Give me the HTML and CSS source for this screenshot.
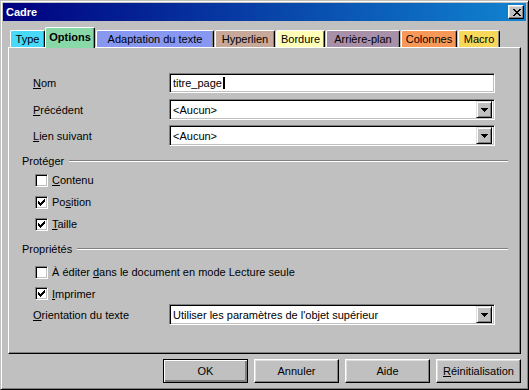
FILE: index.html
```html
<!DOCTYPE html>
<html lang="fr">
<head>
<meta charset="utf-8">
<title>Cadre</title>
<link rel="stylesheet" href="styles.css">
</head>
<body>
<div class="window">
  <div class="titlebar">
    <span class="title">Cadre</span>
    <span class="close"><svg width="8" height="7" viewBox="0 0 8 7" shape-rendering="crispEdges"><path d="M0 0h2v1H0z M6 0h2v1H6z M1 1h2v1H1z M5 1h2v1H5z M2 2h4v1H2z M3 3h2v1H3z M2 4h4v1H2z M1 5h2v1H1z M5 5h2v1H5z M0 6h2v1H0z M6 6h2v1H6z" fill="#000"/></svg></span>
  </div>
  <div class="tabs">
    <div class="tab t-type">Type</div>
    <div class="tab t-options active">Options</div>
    <div class="tab t-adapt">Adaptation du texte</div>
    <div class="tab t-hyper">Hyperlien</div>
    <div class="tab t-bord">Bordure</div>
    <div class="tab t-arr">Arrière-plan</div>
    <div class="tab t-col">Colonnes</div>
    <div class="tab t-macro">Macro</div>
  </div>
  <div class="panel">
    <div class="field f1">
      <span class="label"><u>N</u>om</span>
      <div class="input">titre_page<span class="caret"></span></div>
    </div>
    <div class="field f2">
      <span class="label"><u>P</u>récédent</span>
      <div class="input combo"><span class="value">&lt;Aucun&gt;</span><span class="dd"><svg width="7" height="4" viewBox="0 0 7 4" shape-rendering="crispEdges"><path d="M0 0h7v1H0z M1 1h5v1H1z M2 2h3v1H2z M3 3h1v1H3z" fill="#000"/></svg></span></div>
    </div>
    <div class="field f3">
      <span class="label"><u>L</u>ien suivant</span>
      <div class="input combo"><span class="value">&lt;Aucun&gt;</span><span class="dd"><svg width="7" height="4" viewBox="0 0 7 4" shape-rendering="crispEdges"><path d="M0 0h7v1H0z M1 1h5v1H1z M2 2h3v1H2z M3 3h1v1H3z" fill="#000"/></svg></span></div>
    </div>

    <div class="section s1"><span>Protéger</span><span class="rule"></span></div>
    <div class="check"><span class="box"></span><span><u>C</u>ontenu</span></div>
    <div class="check"><span class="box on"><svg width="7" height="7" viewBox="0 0 7 7" shape-rendering="crispEdges"><path d="M6 0h1v1H6z M5 1h2v1H5z M0 2h1v1H0z M4 2h3v1H4z M0 3h2v1H0z M3 3h3v1H3z M0 4h5v1H0z M1 5h3v1H1z M2 6h1v1H2z" fill="#000"/></svg></span><span>Po<u>s</u>ition</span></div>
    <div class="check"><span class="box on"><svg width="7" height="7" viewBox="0 0 7 7" shape-rendering="crispEdges"><path d="M6 0h1v1H6z M5 1h2v1H5z M0 2h1v1H0z M4 2h3v1H4z M0 3h2v1H0z M3 3h3v1H3z M0 4h5v1H0z M1 5h3v1H1z M2 6h1v1H2z" fill="#000"/></svg></span><span><u>T</u>aille</span></div>

    <div class="section s2"><span>Propriétés</span><span class="rule"></span></div>
    <div class="check c4"><span class="box"></span><span>À éditer <u>d</u>ans le document en mode Lecture seule</span></div>
    <div class="check c5"><span class="box on"><svg width="7" height="7" viewBox="0 0 7 7" shape-rendering="crispEdges"><path d="M6 0h1v1H6z M5 1h2v1H5z M0 2h1v1H0z M4 2h3v1H4z M0 3h2v1H0z M3 3h3v1H3z M0 4h5v1H0z M1 5h3v1H1z M2 6h1v1H2z" fill="#000"/></svg></span><span><u>I</u>mprimer</span></div>
    <div class="field f4">
      <span class="label"><u>O</u>rientation du texte</span>
      <div class="input combo"><span class="value">Utiliser les paramètres de l'objet supérieur</span><span class="dd"><svg width="7" height="4" viewBox="0 0 7 4" shape-rendering="crispEdges"><path d="M0 0h7v1H0z M1 1h5v1H1z M2 2h3v1H2z M3 3h1v1H3z" fill="#000"/></svg></span></div>
    </div>
  </div>
  <div class="buttons">
    <span class="btn default">OK</span>
    <span class="btn">Annuler</span>
    <span class="btn">Aide</span>
    <span class="btn"><u>R</u>éinitialisation</span>
  </div>
</div>
</body>
</html>
```

FILE: styles.css
```css
html, body {
  margin: 0;
  padding: 0;
  background: #c0c0c0;
}
body {
  font-family: "Liberation Sans", Arial, sans-serif;
  font-size: 11px;
  color: #000;
}
u { text-decoration: underline; text-underline-offset: 1px; }

.window {
  width: 529px;
  height: 390px;
  box-sizing: border-box;
  border: 1px solid;
  border-color: #c0c0c0 #000 #000 #c0c0c0;
  box-shadow: inset 1px 1px #fff, inset -1px -1px #808080;
  padding: 2px;
  background: #c0c0c0;
  display: flex;
  flex-direction: column;
}

.titlebar {
  height: 18px;
  flex: none;
  background: linear-gradient(to right, #000080, #1084d0);
  display: flex;
  align-items: center;
  justify-content: space-between;
  padding: 0 2px 0 3px;
}
.title {
  color: #fff;
  font-weight: bold;
  font-size: 11px;
}
.close {
  width: 16px;
  height: 14px;
  box-sizing: border-box;
  background: #c0c0c0;
  border: 1px solid;
  border-color: #fff #000 #000 #fff;
  box-shadow: inset -1px -1px #808080, inset 1px 1px #dfdfdf;
  display: flex;
  align-items: center;
  justify-content: center;
  padding-left: 1px;
}
.close svg { display: block; }

.tabs {
  height: 20px;
  margin-top: 6px;
  padding-left: 7px;
  display: flex;
  align-items: flex-end;
  flex: none;
}
.tab {
  height: 17px;
  box-sizing: border-box;
  border-top: 1px solid #fff;
  border-left: 1px solid #fff;
  border-right: 1px solid #000;
  box-shadow: inset -1px 0 #808080;
  border-radius: 2px 2px 0 0;
  display: flex;
  align-items: center;
  justify-content: center;
  margin-left: 1px;
  white-space: nowrap;
  padding-bottom: 1px;
}
.tab.active {
  height: 21px;
  margin-bottom: -1px;
  position: relative;
  z-index: 1;
  font-weight: bold;
  padding-bottom: 2px;
}
.t-type { width: 35px; margin-left: 0; background: #48d8f8; }
.t-options { width: 50px; margin-left: 0; background: #88d8a8; }
.t-adapt { width: 118px; background: #8898f0; }
.t-hyper { width: 60px; background: #c8a898; }
.t-bord { width: 49px; background: #ffffb8; }
.t-arr { width: 74px; background: #a890a8; }
.t-col { width: 56px; background: #f89858; }
.t-macro { width: 42px; background: #f8d858; }

.panel {
  margin: 0 5px;
  height: 307px;
  box-sizing: border-box;
  border: 1px solid;
  border-color: #fff #000 #000 #fff;
  box-shadow: inset -1px -1px #808080;
  padding: 25px 12px 0 13px;
  flex: none;
}

.field {
  display: flex;
  align-items: center;
  margin: 0 13px 0 11px;
}
.field .label {
  width: 136px;
  flex: none;
}
.input {
  flex: 1;
  height: 20px;
  box-sizing: border-box;
  background: #fff;
  border: 1px solid;
  border-color: #808080 #fff #fff #808080;
  box-shadow: inset 1px 1px #000, inset -1px -1px #c0c0c0;
  padding: 0 2px 0 3px;
  display: flex;
  align-items: center;
  white-space: nowrap;
}
.caret {
  display: inline-block;
  width: 2px;
  height: 12px;
  background: #000;
  margin-left: 1px;
}
.combo {
  height: 21px;
  padding-right: 2px;
}
.combo .value { flex: 1; }
.dd {
  width: 16px;
  height: 17px;
  box-sizing: border-box;
  background: #c0c0c0;
  border: 1px solid;
  border-color: #dfdfdf #000 #000 #dfdfdf;
  box-shadow: inset 1px 1px #fff, inset -1px -1px #808080;
  display: flex;
  align-items: center;
  justify-content: center;
}
.dd svg { display: block; }

.f2 { margin-top: 6px; }
.f3 { margin-top: 5px; }

.section {
  height: 16px;
  display: flex;
  align-items: center;
}
.section .rule {
  flex: 1;
  height: 0;
  border-top: 1px solid #808080;
  border-bottom: 1px solid #fff;
  margin-left: 5px;
}
.s1 { margin-top: 7px; }
.s2 { margin-top: 6px; }

.check {
  height: 22px;
  display: flex;
  align-items: center;
  margin-left: 13px;
  white-space: nowrap;
}
.c4 { margin-top: 4px; }
.c5 { height: 21px; }
.f4 { margin-top: 0; }

.box {
  width: 13px;
  height: 13px;
  box-sizing: border-box;
  flex: none;
  background: #fff;
  border: 1px solid;
  border-color: #808080 #fff #fff #808080;
  box-shadow: inset 1px 1px #000, inset -1px -1px #c0c0c0;
  margin-right: 4px;
  display: flex;
  align-items: center;
  justify-content: center;
}
.box svg { display: block; }

.buttons {
  margin: 5px 5px 0 0;
  display: flex;
  justify-content: flex-end;
  gap: 6px;
}
.btn {
  width: 85px;
  height: 24px;
  box-sizing: border-box;
  border: 1px solid;
  border-color: #fff #000 #000 #fff;
  box-shadow: inset -1px -1px #808080, inset 1px 1px #dfdfdf;
  display: flex;
  align-items: center;
  justify-content: center;
}
.btn.default {
  border-color: #000;
  box-shadow: inset 1px 1px #fff, inset -1px -1px #808080, inset -2px -2px #808080;
}
```
